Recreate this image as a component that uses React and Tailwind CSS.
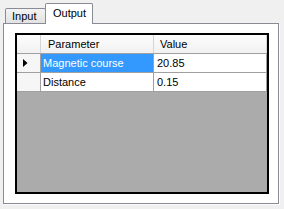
import React from 'react';

const rows = [
    { name: 'Magnetic course', value: '20.85', selected: true },
    { name: 'Distance', value: '0.15', selected: false },
];

const App = () => {
    return (
        <div
            className="w-[284px] h-[209px] bg-[#f0f0f0] pt-[3px] pl-[3px] text-[11px] leading-none text-black overflow-hidden"
            style={{ fontFamily: '"Liberation Sans", Arial, sans-serif' }}
        >
            {/* tab strip */}
            <div className="flex items-end h-[20px] pl-[2px]">
                <div className="w-[41px] h-[15px] border border-b-0 border-[#898c95] rounded-t-[2px] bg-gradient-to-b from-[#f3f3f3] to-[#e2e2e2] flex items-center pl-[6px]">
                    Input
                </div>
                <div className="relative z-10 -ml-px -mb-px w-[48px] h-[21px] border border-b-0 border-[#898c95] rounded-t-[2px] bg-white flex items-start pt-[4px] pl-[7px]">
                    Output
                </div>
            </div>

            {/* tab page */}
            <div className="w-[276px] h-[181px] border border-[#898c95] bg-white pt-[9px] pl-[11px] shadow-[1px_1px_0_#fdfdfd]">
                <div className="w-[254px] h-[161px] border-2 border-black bg-[#ababab] flex flex-col">
                    {/* header */}
                    <div className="flex h-[19px] bg-gradient-to-b from-[#fdfdfd] to-[#f1f1f1] border-b border-[#a0a0a0]">
                        <div className="w-[24px] border-r border-[#d5d5d5]" />
                        <div className="w-[113px] border-r border-[#d5d5d5] flex items-center pl-[7px]">Parameter</div>
                        <div className="w-[113px] border-r border-[#d5d5d5] flex items-center pl-[6px]">Value</div>
                    </div>

                    {rows.map((r) => (
                        <div key={r.name} className="flex h-[19px]">
                            <div className="w-[24px] bg-[#f6f6f6] border-r border-b border-[#a0a0a0] flex items-center pl-[6px]">
                                {r.selected && (
                                    <svg width="5" height="8" viewBox="0 0 5 8">
                                        <path d="M0 0 L4.5 4 L0 8 Z" fill="#000" />
                                    </svg>
                                )}
                            </div>
                            <div
                                className={
                                    r.selected
                                        ? 'w-[113px] bg-[#3399ff] text-white border-r border-b border-[#a0a0a0] flex items-center pl-[2px]'
                                        : 'w-[113px] bg-white border-r border-b border-[#a0a0a0] flex items-center pl-[2px]'
                                }
                            >
                                {r.name}
                            </div>
                            <div className="w-[113px] bg-white border-r border-b border-[#a0a0a0] flex items-center pl-[3px]">
                                {r.value}
                            </div>
                        </div>
                    ))}
                </div>
            </div>
        </div>
    );
};

export default App;
